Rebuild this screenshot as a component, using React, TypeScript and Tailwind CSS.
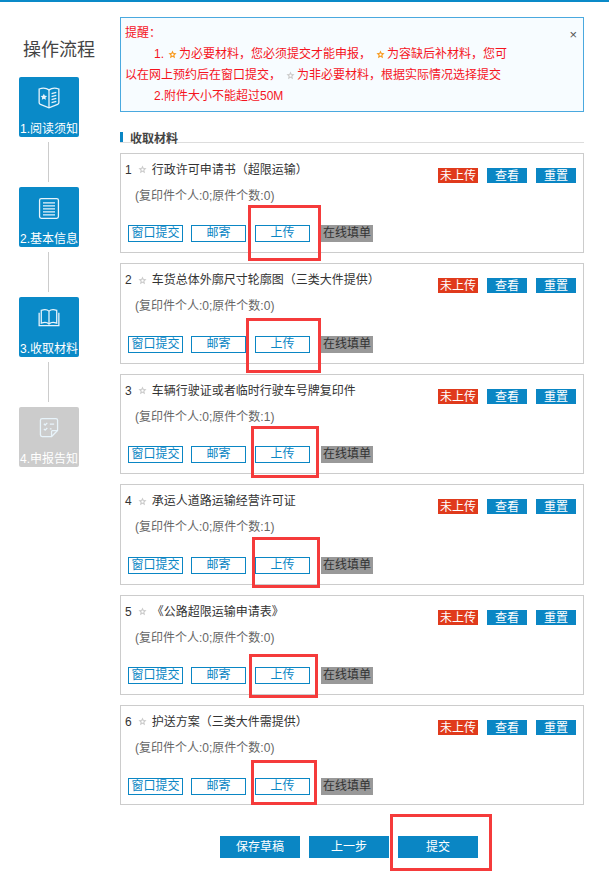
import React from 'react';

const font = 'font-["Liberation_Sans","Noto_Sans_CJK_SC",sans-serif]';

function Star({ color, className = '' }: { color: string; className?: string }) {
  return (
    <svg viewBox="0 0 24 24" className={`inline-block h-[9px] w-[9px] align-[-1px] ${className}`}>
      <path d="M12 1l3.2 7 7.6.9-5.6 5.2 1.5 7.6L12 17.900 5.300 21.700l1.500-7.600L1.200 8.900 8.800 8z" fill={color} />
      <circle cx="12" cy="12.500" r="3" fill="#fff" />
    </svg>
  );
}

const steps = [
  {
    label: '1.阅读须知',
    bg: 'bg-[#0a8ac8]',
    icon: (
      <>
        <path d="M2.500 3.500c4.500-1.500 8.500-1 11.500 1 3-2 7-2.500 11.500-1v16c0 1-.5 1.500-1.500 2l-10 4-10-4c-1-.5-1.500-1-1.500-2z" />
        <path d="M14 4.500V25M17 9l5.500-1.500M17 12.500l5.500-1.500M17 16l5.500-1.500M17 19.500l5.500-1.500" />
        <path d="M8 9l1.200 2.400 2.600.3-1.900 1.800.5 2.600L8 14.900l-2.400 1.200.5-2.600-1.900-1.800 2.600-.3z" fill="#e8f4fb" stroke="none" />
      </>
    ),
  },
  {
    label: '2.基本信息',
    bg: 'bg-[#0a8ac8]',
    icon: (
      <>
        <rect x="3" y="3" width="22" height="23" rx="2" />
        <path d="M7 8h14M7 11.500h14M7 15h14M7 18.500h14M7 22h14" />
      </>
    ),
  },
  {
    label: '3.收取材料',
    bg: 'bg-[#0a8ac8]',
    icon: (
      <>
        <path d="M5 20V5c4-1.500 7-1 9 1 2-2 5-2.500 9-1v15c-4-1.500-7-1-9 1-2-2-5-2.500-9-1z" />
        <path d="M14 6v15M2.500 8v15h23V8" />
      </>
    ),
  },
  {
    label: '4.申报告知',
    bg: 'bg-[#cccccc]',
    icon: (
      <>
        <path d="M24 17V5a2 2 0 0 0-2-2H6a2 2 0 0 0-2 2v17a2 2 0 0 0 2 2h11z" />
        <path d="M24 17h-6a1 1 0 0 0-1 1v6M8 9l1.500 1.500L12 8M8 15l1.500 1.500L12 14M15 9.500h5M15 15h2" />
      </>
    ),
  },
];

const materials = [
  { name: '行政许可申请书（超限运输）', copies: 0, originals: 0, mark: 'left-[127px] top-[51px] w-[73px] h-[56px]' },
  { name: '车货总体外廓尺寸轮廓图（三类大件提供）', copies: 0, originals: 0, mark: 'left-[125px] top-[53.75px] w-[75px] h-[55px]' },
  { name: '车辆行驶证或者临时行驶车号牌复印件', copies: 0, originals: 1, mark: 'left-[130px] top-[51.3px] w-[68px] h-[52px]' },
  { name: '承运人道路运输经营许可证', copies: 0, originals: 1, mark: 'left-[131px] top-[51.85px] w-[68px] h-[51px]' },
  { name: '《公路超限运输申请表》', copies: 0, originals: 0, mark: 'left-[128px] top-[58.4px] w-[69px] h-[44px]' },
  { name: '护送方案（三类大件需提供）', copies: 0, originals: 0, mark: 'left-[130px] top-[53.95px] w-[66px] h-[45px]' },
];

function MaterialCard({ index, item }: { index: number; item: (typeof materials)[number] }) {
  return (
    <div className="relative h-[100.45px] border border-[#cccccc] bg-white">
      <div className="flex justify-between pl-[4px] pr-[7px] pt-[7px]">
        <div className="flex items-center h-[18px] text-[12px] text-[#333333]">
          <span>{index + 1}</span>
          <Star color="#cccccc" className="ml-[6px] mr-[5px]" />
          <span>{item.name}</span>
        </div>
        <div className="flex gap-[9px] pt-[7px] text-[12px] leading-[16px] text-white">
          <span className="h-[15px] w-[40px] text-center bg-[#e03a1c]">未上传</span>
          <span className="h-[15px] w-[40px] text-center bg-[#0a86c4]">查看</span>
          <span className="h-[15px] w-[40px] text-center bg-[#0a86c4]">重置</span>
        </div>
      </div>
      <div className="pl-[14px] mt-[4px] h-[18px] leading-[18px] text-[12px] text-[#666666]">
        (复印件个人:{item.copies};原件个数:{item.originals})
      </div>
      <div className="flex items-start mt-[20.55px] pl-[7px] text-[12px] leading-[15px]">
        <span className="w-[55px] h-[17px] text-center border border-[#0a86c4] text-[#0a86c4]">窗口提交</span>
        <span className="w-[55px] h-[17px] ml-[8px] text-center border border-[#0a86c4] text-[#0a86c4]">邮寄</span>
        <span className="w-[55px] h-[17px] ml-[9px] text-center border border-[#0a86c4] text-[#0a86c4]">上传</span>
        <span className="w-[52px] h-[17px] ml-[11px] text-center leading-[17px] bg-[#999999] text-[#333333]">在线填单</span>
      </div>
      <div className={`absolute ${item.mark} border-[3px] border-[#f53b3b]`} />
    </div>
  );
}

export default function App() {
  return (
    <div className={`relative min-h-[881px] w-[609px] bg-white overflow-hidden border-t-2 border-[#0a8ac8] ${font}`}>
      <div className="flex">
        {/* Sidebar */}
        <div className="w-[120px] shrink-0 pl-[19px]">
          <div className="ml-[4px] pt-[36px] h-[75px] text-[18px] leading-[24px] text-[#444444] whitespace-nowrap">操作流程</div>
          {steps.map((s, i) => (
            <div key={s.label}>
              <div className={`flex h-[60px] w-[60px] flex-col items-center rounded-[2px] ${s.bg}`}>
                <svg viewBox="0 0 28 28" fill="none" stroke="#e8f4fb" strokeWidth="1.500" className="mt-[9px] h-[24px] w-[24px]">
                  {s.icon}
                </svg>
                <div className="mt-[11px] text-[12px] leading-[16px] whitespace-nowrap text-white">{s.label}</div>
              </div>
              {i < 3 && <div className="my-[5px] ml-[29px] h-[40px] w-[1px] bg-[#cccccc]" />}
            </div>
          ))}
        </div>

        {/* Main */}
        <div className="w-[464px] pt-[15px]">
          <div className="relative h-[95px] border border-[#4aa9df] bg-[#f7fcff] px-[4px] pt-[5px] text-[12px] leading-[21px] text-[#f5141e]">
            <div>提醒：</div>
            <div className="pl-[29px]">
              1.<Star color="#f79a1e" className="ml-[4px] mr-[2px]" />为必要材料，您必须提交才能申报，<Star color="#f79a1e" className="ml-[5px] mr-[2px]" />为容缺后补材料，您可
            </div>
            <div>
              以在网上预约后在窗口提交，<Star color="#cccccc" className="ml-[5px] mr-[2px]" />为非必要材料，根据实际情况选择提交
            </div>
            <div className="pl-[29px]">2.附件大小不能超过50M</div>
            <span className="absolute right-[6px] top-[6px] text-[13px] leading-[21px] text-[#555555]">×</span>
          </div>

          <div className="mt-[20px] flex h-[11px] border-b border-[#dddddd]">
            <span className="h-[10px] w-[3px] bg-[#0a86c4]" />
            <span className="ml-[7px] -mt-[1px] h-[16px] text-[12px] font-bold leading-[16px] text-[#444444]">收取材料</span>
          </div>

          <div className="mt-[9.8px] flex flex-col gap-[10px]">
            {materials.map((m, i) => (
              <MaterialCard key={m.name} index={i} item={m} />
            ))}
          </div>

          <div className="relative mt-[30.5px] flex gap-[9px] pl-[100px] text-[12px] leading-[22px] text-white">
            <span className="w-[80px] text-center bg-[#0a86c4]">保存草稿</span>
            <span className="w-[80px] text-center bg-[#0a86c4]">上一步</span>
            <span className="w-[80px] text-center bg-[#0a86c4]">提交</span>
            <div className="absolute left-[270px] top-[-22px] h-[57px] w-[102px] border-[3px] border-[#f53b3b]" />
          </div>
        </div>
      </div>
    </div>
  );
}
